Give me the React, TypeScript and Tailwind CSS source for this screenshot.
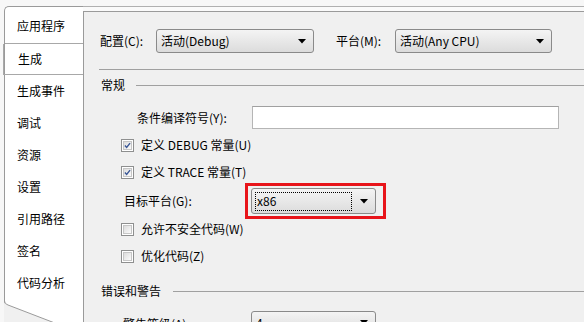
import React from "react";

const font = { fontFamily: '"Noto Sans CJK SC", "Noto Sans", sans-serif' };

const tabs = ["应用程序", "生成", "生成事件", "调试", "资源", "设置", "引用路径", "签名", "代码分析"];

function Arrow() {
    return (
        <svg width="8" height="5" viewBox="0 0 8 5" className="shrink-0">
            <path d="M0 0 H8 L4 4.5 Z" fill="#000" />
        </svg>
    );
}

function Select({ value, width, focus }: { value: string; width: string; focus?: boolean }) {
    return (
        <div
            className={`${width} h-full flex items-center justify-between pl-[3px] pr-[7px] rounded-[3px] border border-[#8a8a8a] bg-gradient-to-b from-[#f4f4f4] to-[#dcdcdc]`}
        >
            {focus ? (
                <span className="flex-1 mr-[8px] h-[19px] flex items-center border border-dotted border-black px-[1px]">
                    {value}
                </span>
            ) : (
                <span className="pl-[1px]">{value}</span>
            )}
            <Arrow />
        </div>
    );
}

function Checkbox({ checked }: { checked?: boolean }) {
    return (
        <div className="w-[13px] h-[13px] border border-[#8e8f8f] bg-white p-[1px] shrink-0">
            <div className="w-full h-full border border-[#c6c6c6] bg-gradient-to-br from-[#dcdcdc] to-[#fbfbfb] flex items-center justify-center">
                {checked && (
                    <svg width="9" height="9" viewBox="0 0 9 9">
                        <path d="M1.2 4.6 L3.4 7 L7.8 1.4" stroke="#3a5796" strokeWidth="1.8" fill="none" />
                    </svg>
                )}
            </div>
        </div>
    );
}

function CheckRow({ label, checked, mt }: { label: string; checked?: boolean; mt: string }) {
    return (
        <div className={`${mt} shrink-0 h-[14px] flex items-center pl-[37px] gap-[7px]`}>
            <Checkbox checked={checked} />
            <span>{label}</span>
        </div>
    );
}

export default function App() {
    return (
        <div className="w-[584px] h-[322px] overflow-hidden flex bg-[#f0f0f0] text-[12px] leading-none text-black" style={font}>
            <div className="w-[83px] shrink-0 pt-[6px] pl-[4px] bg-[#f7f7f7] flex flex-col">
                <div className="relative flex-1 bg-white border-l border-t border-[#9a9a9a] rounded-tl-[5px] flex flex-col">
                    <div className="h-[37px] shrink-0 border-b border-[#a8a8a8] flex items-center pl-[12px] pt-[1px]">应用程序</div>
                    <div className="h-[31px] shrink-0 -ml-[2px] border-l border-b border-[#a8a8a8] flex items-center pl-[14px]">生成</div>
                    {tabs.slice(2).map((t) => (
                        <div key={t} className="h-[32px] shrink-0 flex items-center pl-[12px]">
                            {t}
                        </div>
                    ))}
                    <svg className="absolute left-[-1px] top-[294px]" width="80" height="24" viewBox="0 0 80 24">
                        <path d="M0 0 Q0 3 4 4 L56 24 L80 24 L80 30 L0 30 Z" fill="#f0f0f0" />
                        <path d="M0.5 0 Q0.5 3 4 4 L56 24" stroke="#9a9a9a" fill="none" />
                    </svg>
                </div>
            </div>
            <div className="flex-1 min-h-0 flex flex-col border-l border-[#9a9a9a]">
                <div className="h-[7px] shrink-0 bg-[#f7f7f7] border-b border-[#b0b0b0] -ml-px" />
                <div className="h-[5px] shrink-0 bg-[#fafafa] border-b border-[#9a9a9a] -ml-px" />
                <div className="mt-[17px] shrink-0 h-[24px] flex items-center pl-[16px]">
                    <span className="w-[56px]">配置(C):</span>
                    <Select value="活动(Debug)" width="w-[158px]" />
                    <span className="ml-[22px] w-[59px]">平台(M):</span>
                    <Select value="活动(Any CPU)" width="w-[157px]" />
                </div>
                <div className="mt-[16px] shrink-0 ml-[15px] h-px bg-[#a0a0a0]" />
                <div className="mt-[7px] shrink-0 h-[16px] flex items-center pl-[17px]">
                    <span>常规</span>
                    <div className="ml-[11px] flex-1 h-px bg-[#a0a0a0]" />
                </div>
                <div className="mt-[13px] shrink-0 h-[23px] flex items-center pl-[53px]">
                    <span className="w-[115px]">条件编译符号(Y):</span>
                    <div className="w-[307px] h-full bg-white border border-[#b5b5b5] border-t-[#a0a0a0]" />
                </div>
                <CheckRow mt="mt-[9px]" checked label="定义 DEBUG 常量(U)" />
                <CheckRow mt="mt-[13px]" checked label="定义 TRACE 常量(T)" />
                <div className="mt-[4px] shrink-0 h-[36px] flex items-center pl-[40px]">
                    <span className="w-[121px]">目标平台(G):</span>
                    <div className="w-[141px] h-full border-[3px] border-[#e8141a] pl-[3px] pr-[7px] py-[2px]">
                        <Select value="x86" width="w-[125px]" focus />
                    </div>
                </div>
                <CheckRow mt="mt-[3px]" label="允许不安全代码(W)" />
                <CheckRow mt="mt-[13px]" label="优化代码(Z)" />
                <div className="mt-[20px] shrink-0 h-[16px] flex items-center pl-[17px]">
                    <span>错误和警告</span>
                    <div className="ml-[12px] flex-1 h-px bg-[#a0a0a0]" />
                </div>
                <div className="mt-[12px] shrink-0 h-[23px] flex items-start pl-[39px]">
                    <span className="w-[128px] pt-[7px]">警告等级(A):</span>
                    <Select value="4" width="w-[125px]" />
                </div>
            </div>
        </div>
    );
}
